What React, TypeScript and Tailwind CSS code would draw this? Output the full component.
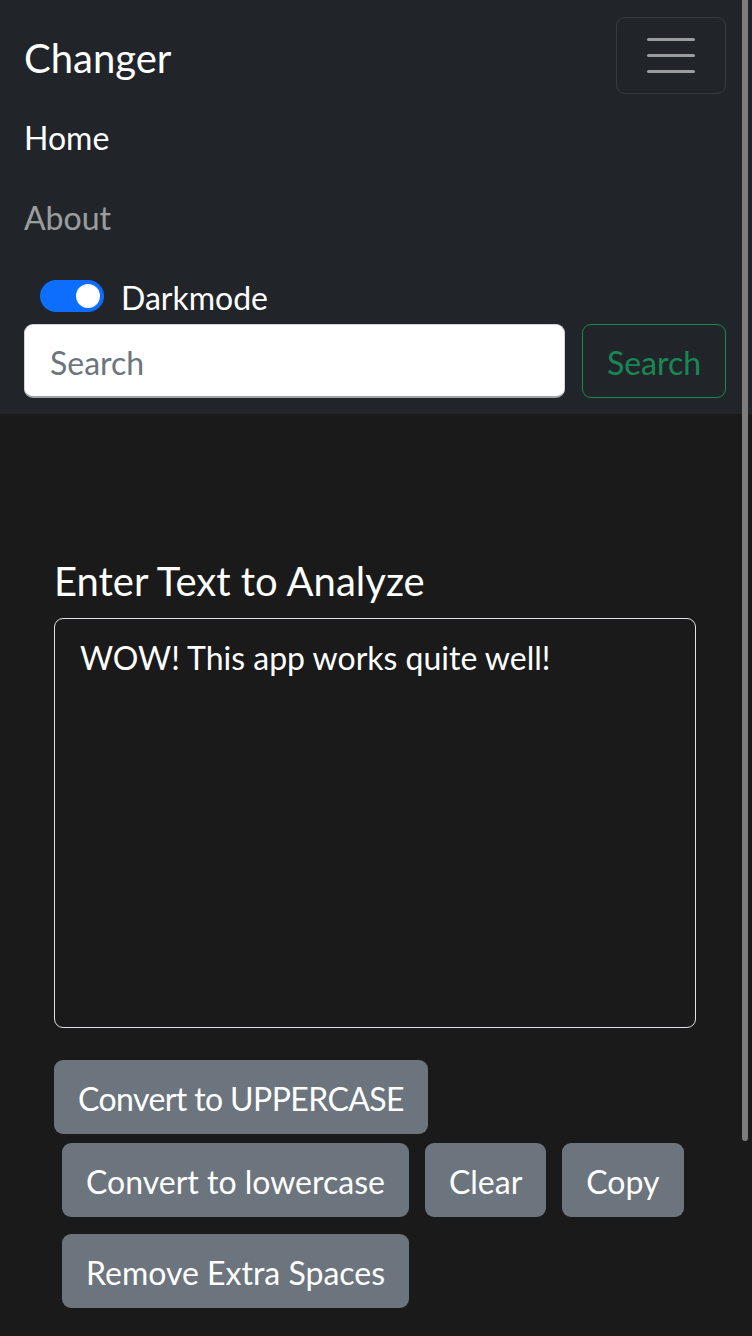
import React, { useState } from 'react';

const font = { fontFamily: "Lato, 'Liberation Sans', sans-serif" };

export default function App() {
  const [text, setText] = useState('WOW! This app works quite well!');
  const [dark, setDark] = useState(true);

  return (
    <div className="relative min-h-[1336px] bg-[#1a1a1a] text-white" style={font}>
      {/* Navbar */}
      <nav className="bg-[#212529] pt-[17px] pb-[16px] pl-[24px] pr-[26px]">
        <div className="flex items-center justify-between">
          <span className="text-[40px] leading-[60px] text-white mt-[4px]">Changer</span>
          <button className="w-[110px] h-[77px] rounded-[9px] border border-white/10 flex flex-col items-center justify-center gap-[13px]">
            <span className="block w-[48px] h-[3px] rounded-full bg-[#9a9c9e]" />
            <span className="block w-[48px] h-[3px] rounded-full bg-[#9a9c9e]" />
            <span className="block w-[48px] h-[3px] rounded-full bg-[#9a9c9e]" />
          </button>
        </div>
        <ul className="mt-[4px]">
          <li className="h-[80px] flex items-center text-[32px] text-white">Home</li>
          <li className="h-[80px] flex items-center text-[32px] text-white/55">About</li>
        </ul>
        <div className="mt-[16px] h-[48px] flex items-center pl-[16px]">
          <button
            onClick={() => setDark(!dark)}
            className={`w-[64px] h-[32px] rounded-full flex items-center px-[4px] mt-[-4px] ${dark ? 'bg-[#0d6efd] justify-end' : 'bg-white justify-start'}`}
          >
            <span className="block w-[24px] h-[24px] rounded-full bg-white" />
          </button>
          <span className="ml-[17px] text-[32px] leading-[48px]">Darkmode</span>
        </div>
        <div className="mt-[2px] flex gap-[17px]">
          <input
            placeholder="Search"
            className="flex-1 min-w-0 h-[74px] rounded-[9px] bg-white border border-[#ced4da] border-b-2 border-b-[#9ea3a8] px-[25px] pt-[4px] text-[32px] text-[#212529] placeholder:text-[#6c757d] outline-none"
          />
          <button className="w-[144px] h-[74px] rounded-[9px] border border-[#198754] text-[#198754] text-[32px] pt-[4px]">
            Search
          </button>
        </div>
      </nav>

      {/* Text form */}
      <div className="pl-[54px] pr-[56px] pt-[143px]">
        <h2 className="text-[40px] leading-[48px] text-white mb-[13px]">Enter Text to Analyze</h2>
        <textarea
          value={text}
          onChange={(e) => setText(e.target.value)}
          className="block w-full h-[410px] rounded-[9px] border border-[#dee2e6] bg-[#1a1a1a] text-white text-[32px] leading-[48px] px-[25px] pt-[15px] pb-[12px] resize-none outline-none"
        />
        <div className="mt-[32px] flex flex-wrap">
          <button className="h-[74px] px-[24px] pt-[4px] rounded-[9px] bg-[#6c757d] text-[32px] tracking-[-0.6px] text-white mb-[9px]">
            Convert to UPPERCASE
          </button>
          <div className="w-full flex">
            <button className="h-[74px] px-[24px] pt-[4px] mx-[8px] rounded-[9px] bg-[#6c757d] text-[32px] text-white">
              Convert to lowercase
            </button>
            <button className="h-[74px] px-[24px] pt-[4px] mx-[8px] rounded-[9px] bg-[#6c757d] text-[32px] text-white">
              Clear
            </button>
            <button className="h-[74px] px-[24px] pt-[4px] mx-[8px] rounded-[9px] bg-[#6c757d] text-[32px] text-white">
              Copy
            </button>
          </div>
          <button className="mt-[17px] ml-[8px] h-[74px] px-[24px] pt-[4px] rounded-[9px] bg-[#6c757d] text-[32px] text-white">
            Remove Extra Spaces
          </button>
        </div>
      </div>

      {/* overlay scrollbar thumb */}
      <div className="absolute top-0 left-[742px] w-[6px] h-[1141px] rounded-b-full bg-[#7d7d7d]" />
    </div>
  );
}
